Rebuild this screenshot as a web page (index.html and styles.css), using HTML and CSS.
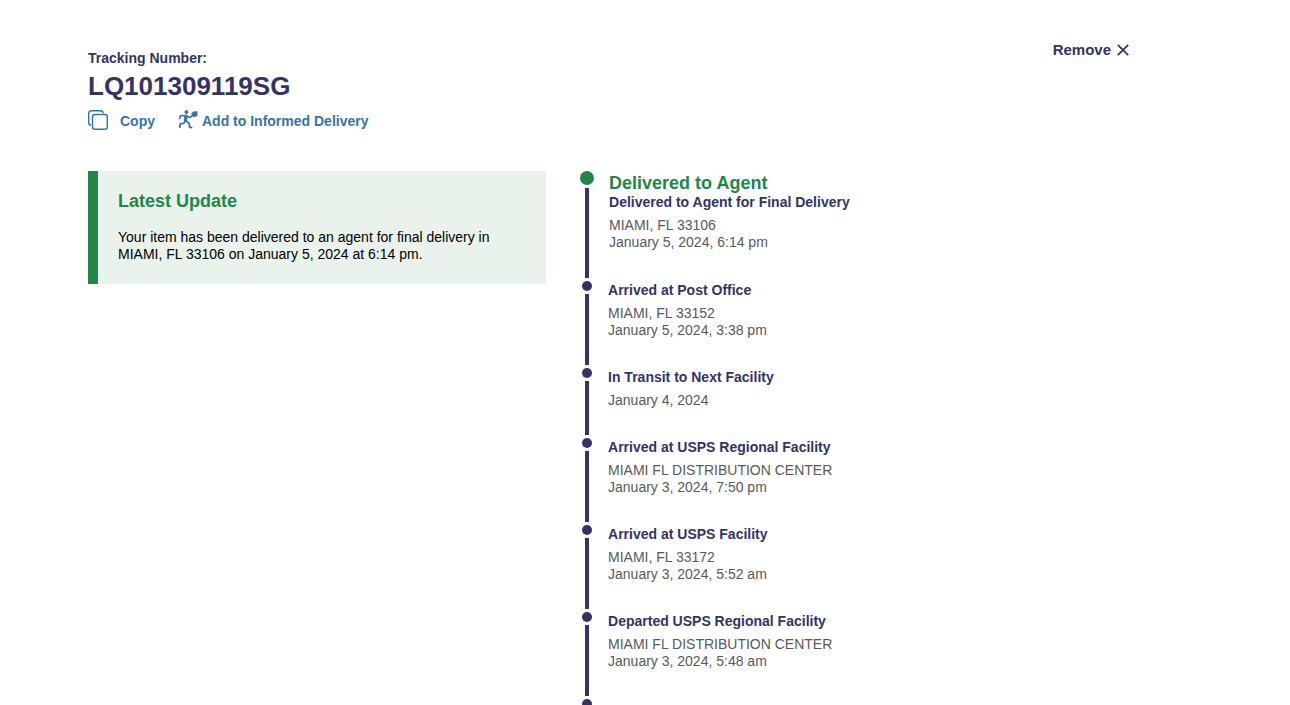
FILE: index.html
```html
<!DOCTYPE html>
<html lang="en">
<head>
  <meta charset="UTF-8">
  <title>Tracking LQ101309119SG</title>
  <meta name="viewport" content="width=device-width, initial-scale=1">
  <link rel="stylesheet" href="styles.css">
</head>
<body>

  <main class="tracking">
    <header class="tracking-header">
      <div>
        <h1 class="tracking-heading">
          <span class="tracking-label">Tracking Number:</span>
          <span class="tracking-number">LQ101309119SG</span>
        </h1>
        <div class="actions">
          <button class="action copy" type="button">
            <svg width="20" height="20" viewBox="0 0 20 20" fill="none" stroke="currentColor" stroke-width="1.4" aria-hidden="true">
              <path d="M3.2 15.4C1.6 15.2.7 14 .7 12.6V3.4C.7 1.8 1.8.7 3.4.7h9c1.5 0 2.7.9 2.9 2.4"/>
              <rect x="4.5" y="4.5" width="14.8" height="14.8" rx="2.6"/>
            </svg>
            Copy
          </button>
          <a class="action informed" href="#">
            <svg width="20" height="20" viewBox="0 0 20 20" fill="none" stroke="currentColor" stroke-linecap="round" stroke-linejoin="round" aria-hidden="true">
              <circle cx="8.4" cy="2.3" r="1.7" fill="currentColor" stroke="none"/>
              <path d="M7 1.2L9.4.6" stroke-width="1"/>
              <path d="M7.9 6.2L7.6 10.2" stroke-width="3.2"/>
              <path d="M6.8 5.8L2.4 5.6 1.6 8.6M9 6.2l3.2 1.2 2.8-2.4" stroke-width="1.6"/>
              <path d="M7 11L5.8 13.4 2.2 13.8 1.8 17.4M8 11l3.2 2.4.4 3.8 2 .4" stroke-width="1.8"/>
              <path d="M14 3.6l2-1.8 1.2.4 1.8-.4-.2 1.8.2 1.6-2.4 1.2-2.2-.6z" fill="currentColor" stroke-width="1.2"/>
            </svg>
            Add to Informed Delivery
          </a>
        </div>
      </div>
      <button class="remove" type="button">
        Remove
        <svg width="12" height="12" viewBox="0 0 12 12" fill="none" stroke="currentColor" stroke-width="1.8" aria-hidden="true">
          <path d="M.8.8l10.4 10.4M11.2.8L.8 11.2"/>
        </svg>
      </button>
    </header>

    <div class="tracking-body">
      <section class="latest">
        <h2>Latest Update</h2>
        <p>Your item has been delivered to an agent for final delivery in MIAMI, FL 33106 on January 5, 2024 at 6:14 pm.</p>
      </section>

      <ol class="timeline">
        <li class="step current">
          <h2>Delivered to Agent</h2>
          <h3>Delivered to Agent for Final Delivery</h3>
          <p>MIAMI, FL 33106<br>January 5, 2024, 6:14 pm</p>
        </li>
        <li class="step">
          <h3>Arrived at Post Office</h3>
          <p>MIAMI, FL 33152<br>January 5, 2024, 3:38 pm</p>
        </li>
        <li class="step">
          <h3>In Transit to Next Facility</h3>
          <p>January 4, 2024</p>
        </li>
        <li class="step">
          <h3>Arrived at USPS Regional Facility</h3>
          <p>MIAMI FL DISTRIBUTION CENTER<br>January 3, 2024, 7:50 pm</p>
        </li>
        <li class="step">
          <h3>Arrived at USPS Facility</h3>
          <p>MIAMI, FL 33172<br>January 3, 2024, 5:52 am</p>
        </li>
        <li class="step">
          <h3>Departed USPS Regional Facility</h3>
          <p>MIAMI FL DISTRIBUTION CENTER<br>January 3, 2024, 5:48 am</p>
        </li>
        <li class="step"></li>
      </ol>
    </div>
  </main>

</body>
</html>
```
FILE: styles.css
```css
:root {
  --navy: #333366;
  --blue: #3573a6;
  --green: #218748;
  --green-light: #e9f3ec;
  --gray: #595959;
}

* {
  box-sizing: border-box;
}

body {
  margin: 0;
  font-family: "Liberation Sans", Arial, sans-serif;
  font-size: 14px;
  line-height: 17px;
  color: #000;
  background-color: #fff;
}

h1, h2, h3, p, ol {
  margin: 0;
  padding: 0;
}

button {
  padding: 0;
  border: 0;
  background: none;
  font: inherit;
  cursor: pointer;
}

.tracking {
  max-width: 1217px;
  padding: 40px 88px 0;
}

.tracking-header {
  display: flex;
  justify-content: space-between;
  align-items: flex-start;
}

.tracking-heading {
  padding-top: 10px;
  color: var(--navy);
}

.tracking-label,
.tracking-number {
  display: block;
}

.tracking-label {
  font-size: 14px;
  line-height: 17px;
}

.tracking-number {
  font-size: 26px;
  line-height: 38px;
}

.actions {
  display: flex;
  gap: 23px;
  margin-top: 5px;
}

.action {
  display: flex;
  align-items: flex-start;
  font-weight: bold;
  line-height: 22px;
  color: var(--blue);
  text-decoration: none;
}

.copy {
  gap: 12px;
}

.informed {
  gap: 4px;
}

.remove {
  display: flex;
  align-items: center;
  gap: 6px;
  font-size: 15px;
  font-weight: bold;
  line-height: 20px;
  color: var(--navy);
}

.tracking-body {
  display: grid;
  grid-template-columns: 44fr 56fr;
  align-items: start;
  padding-top: 39px;
}

.latest {
  padding: 20px 40px 21px 20px;
  border-left: 10px solid var(--green);
  background-color: var(--green-light);
}

.latest h2 {
  margin-bottom: 18px;
  font-size: 18px;
  line-height: 20px;
  color: var(--green);
}

.timeline {
  margin-left: 34px;
  list-style: none;
}

.step {
  position: relative;
  min-height: 16px;
  padding: 4px 0 26px 28px;
  color: var(--gray);
}

.step h2 {
  font-size: 18px;
  line-height: 21px;
  color: var(--green);
}

.step h3 {
  margin-bottom: 6px;
  font-size: 14px;
  line-height: 17px;
  color: var(--navy);
}

/* dot */
.step::before {
  content: "";
  position: absolute;
  top: 3px;
  left: 2px;
  width: 10px;
  height: 10px;
  border-radius: 50%;
  background-color: var(--navy);
}

/* connecting line */
.step::after {
  content: "";
  position: absolute;
  top: 16px;
  bottom: 0;
  left: 5px;
  width: 4px;
  background-color: var(--navy);
}

.step:last-child::after {
  display: none;
}

.current {
  padding: 2px 0 27px 29px;
}

.current::before {
  top: 0;
  left: 0;
  width: 14px;
  height: 14px;
  background-color: var(--green);
}

.current::after {
  top: 17px;
}
```
